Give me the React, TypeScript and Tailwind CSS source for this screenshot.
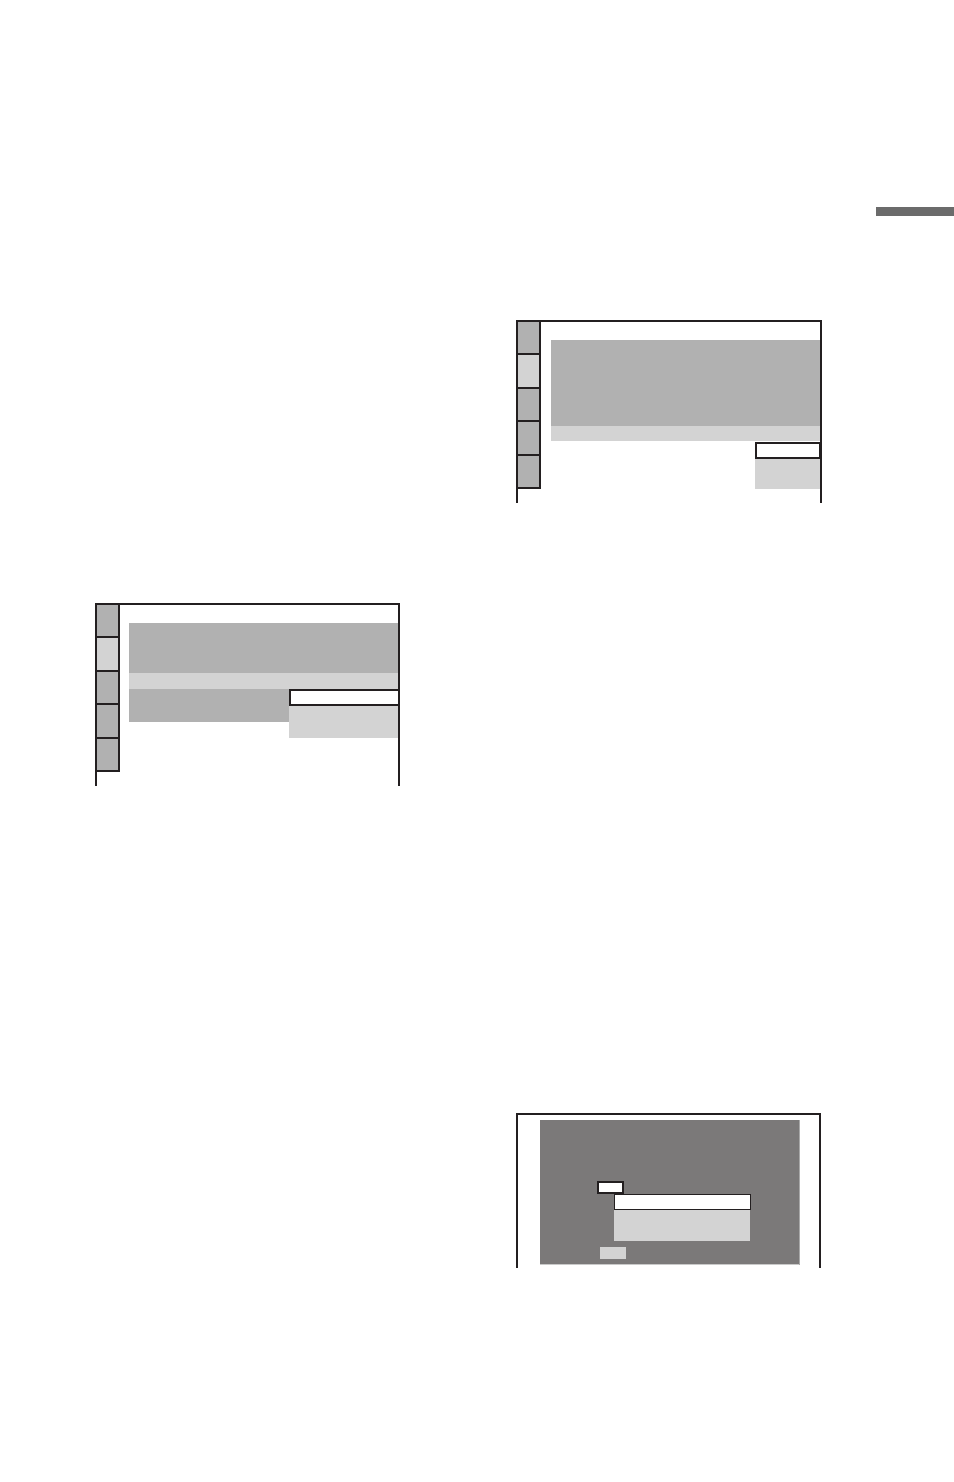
import React from 'react';

const LINE = '#231f20';
const GRAY = '#b1b1b1';
const LIGHT = '#d3d3d3';
const DARK = '#7b7979';

// Left tab strip shared by the two menu screens
const TabStrip = ({ active }: { active: number }) => {
  const edges = [0, 34, 68, 101, 135, 168];
  return (
    <g>
      {edges.slice(0, 5).map((y, i) => (
        <rect key={i} x={0} y={y} width={24} height={edges[i + 1] - y} fill={i === active ? LIGHT : GRAY} />
      ))}
      {edges.slice(1).map((y) => (
        <rect key={y} x={0} y={y - 1} width={25} height={2} fill={LINE} />
      ))}
      <rect x={23} y={0} width={2} height={169} fill={LINE} />
    </g>
  );
};

const Frame = ({ w, h }: { w: number; h: number }) => (
  <g>
    <rect x={0} y={0} width={w} height={2} fill={LINE} />
    <rect x={0} y={0} width={2} height={h} fill={LINE} />
    <rect x={w - 2} y={0} width={2} height={h} fill={LINE} />
  </g>
);

const SetupScreenA = () => (
  <svg width={306} height={183} shapeRendering="crispEdges" className="block">
    <rect x={35} y={20} width={269} height={86} fill={GRAY} />
    <rect x={35} y={106} width={269} height={15} fill={LIGHT} />
    <rect x={239} y={139} width={65} height={30} fill={LIGHT} />
    <rect x={240} y={123} width={64} height={15} fill="#fff" stroke={LINE} strokeWidth={2} />
    <TabStrip active={1} />
    <Frame w={306} h={183} />
  </svg>
);

const SetupScreenB = () => (
  <svg width={305} height={183} shapeRendering="crispEdges" className="block">
    <rect x={34} y={20} width={269} height={50} fill={GRAY} />
    <rect x={34} y={70} width={269} height={16} fill={LIGHT} />
    <rect x={34} y={86} width={160} height={33} fill={GRAY} />
    <rect x={194} y={102} width={109} height={33} fill={LIGHT} />
    <rect x={195} y={87} width={109} height={15} fill="#fff" stroke={LINE} strokeWidth={2} />
    <TabStrip active={1} />
    <Frame w={305} h={183} />
  </svg>
);

const DialogScreen = () => (
  <svg width={305} height={155} shapeRendering="crispEdges" className="block">
    <rect x={24} y={7} width={260} height={145} fill={DARK} />
    <rect x={24} y={151} width={260} height={1} fill="#c9c9c9" />
    <rect x={283} y={7} width={1} height={145} fill="#a9a9a9" />
    <rect x={82} y={69} width={25} height={11} fill="#fff" stroke={LINE} strokeWidth={2} />
    <rect x={98} y={97} width={136} height={31} fill={LIGHT} />
    <rect x={98.5} y={81.5} width={136} height={15} fill="#fff" stroke={LINE} strokeWidth={1.5} />
    <rect x={84} y={134} width={26} height={12} fill={LIGHT} />
    <Frame w={305} h={155} />
  </svg>
);

const App = () => {
  return (
    <div className="w-[954px] h-[1482px] bg-white overflow-hidden font-['Liberation_Sans',sans-serif]">
      {/* section marker */}
      <div className="flex justify-end pt-[207px]">
        <div className="w-[78px] h-[9px] bg-[#6b6b6b]" />
      </div>

      <div className="flex">
        <div className="w-[516px] pl-[95px] pt-[387px]">
          <SetupScreenB />
        </div>
        <div className="flex flex-col pt-[104px] gap-[610px]">
          <SetupScreenA />
          <DialogScreen />
        </div>
      </div>
    </div>
  );
};

export default App;
